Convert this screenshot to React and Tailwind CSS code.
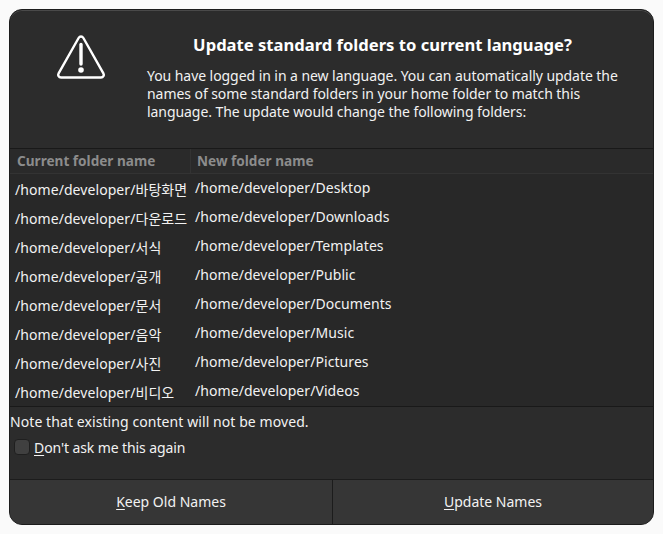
const ROWS = [
  ['바탕화면', 'Desktop'],
  ['다운로드', 'Downloads'],
  ['서식', 'Templates'],
  ['공개', 'Public'],
  ['문서', 'Documents'],
  ['음악', 'Music'],
  ['사진', 'Pictures'],
  ['비디오', 'Videos'],
];

function WarningIcon() {
  return (
    <svg width="50" height="46" viewBox="0 0 50 46" fill="none" className="block">
      <path d="M25 2.5c-1 0-1.8.5-2.4 1.5L2.6 39.4c-1.1 2 .2 4.1 2.4 4.1h40c2.2 0 3.5-2.1 2.4-4.1L27.4 4c-.6-1-1.4-1.5-2.4-1.5z" stroke="#fff" strokeWidth="2.4" strokeLinejoin="round" />
      <path d="M25 10.5v19.5" stroke="#fff" strokeWidth="3.4" strokeLinecap="round" />
      <circle cx="25" cy="36" r="2.8" fill="#fff" />
    </svg>
  );
}

export default function App() {
  return (
    <div className="w-[663px] h-[534px] bg-[#fafafa] p-[9px] font-['Noto_Sans','Noto_Sans_CJK_KR',sans-serif] text-[14px] text-[#f2f2f2]">
      <div className="w-[645px] h-[516px] flex flex-col rounded-[13px] overflow-hidden bg-[#2c2c2c] border border-[#1c1c1c] shadow-[inset_0_1px_0_#4a4a4a]">
        {/* Header */}
        <div className="h-[138px] flex shrink-0">
          <div className="w-[137px] shrink-0 pl-[46px] pt-[24px]">
            <WarningIcon />
          </div>
          <div className="flex-1 pt-[24px] pr-[20px]">
            <h1 className="text-[16.6px] leading-[22px] font-bold text-center text-white pr-[15px]">Update standard folders to current language?</h1>
            <p className="mt-[11px] text-[14px] leading-[18px] tracking-[-0.06px]">
              You have logged in in a new language. You can automatically update the<br />
              names of some standard folders in your home folder to match this<br />
              language. The update would change the following folders:
            </p>
          </div>
        </div>

        {/* Folder table */}
        <div className="h-[259px] shrink-0 bg-[#282828] border-y border-[#191919] flex flex-col">
          <div className="h-[25px] flex items-center shrink-0 border-b border-[#333333] font-bold text-[13.6px] text-[#8c8c8c] bg-[#2a2a2a]">
            <div className="w-[181px] h-full flex items-center pl-[7px] border-r border-[#333333]">Current folder name</div>
            <div className="pl-[6px]">New folder name</div>
          </div>
          {ROWS.map(([oldName, newName]) => (
            <div key={newName} className="h-[29px] flex shrink-0 tracking-[0.07px]">
              <div className="w-[180px] shrink-0 pl-[5px] pt-[6px] leading-[20px] whitespace-nowrap">/home/developer/{oldName}</div>
              <div className="pl-[5px] pt-[4px] leading-[20px] whitespace-nowrap">/home/developer/{newName}</div>
            </div>
          ))}
        </div>

        {/* Note and checkbox */}
        <div className="flex-1 flex flex-col">
          <p className="pt-[5px] leading-[20px] tracking-[0.08px]">Note that existing content will not be moved.</p>
          <label className="mt-[5px] flex items-center pl-[4px] h-[20px]">
            <span className="w-[16px] h-[16px] rounded-[4px] bg-[#404040] border border-[#1f1f1f]" />
            <span className="ml-[4px] tracking-[-0.1px]"><span className="underline underline-offset-2">D</span>on't ask me this again</span>
          </label>
        </div>

        {/* Buttons */}
        <div className="h-[45px] shrink-0 flex bg-[#363636] border-t border-[#1c1c1c]">
          <button className="w-[323px] pb-[2px] border-r border-[#1c1c1c] text-center"><span className="underline underline-offset-2">K</span>eep Old Names</button>
          <button className="flex-1 pb-[2px] text-center"><span className="underline underline-offset-2">U</span>pdate Names</button>
        </div>
      </div>
    </div>
  );
}
